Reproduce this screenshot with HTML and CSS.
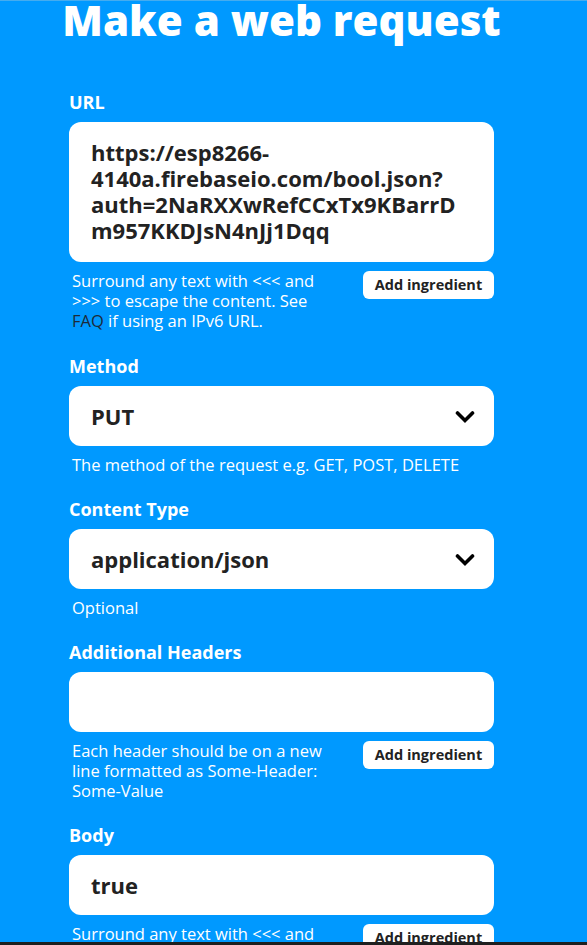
FILE: index.html
```html
<!DOCTYPE html>
<html lang="en">
<head>
<meta charset="utf-8">
<title>Make a web request</title>
<link rel="stylesheet" href="styles.css">
</head>
<body>
<div class="topline"></div>
<main class="form">
  <h1 class="title">Make a web request</h1>

  <section class="field field-first">
    <div class="label">URL</div>
    <div class="box box-multi">
      <span class="line">https://esp8266-</span>
      <span class="line">4140a.firebaseio.com/bool.json?</span>
      <span class="line">auth=2NaRXXwRefCCxTx9KBarrD</span>
      <span class="line">m957KKDJsN4nJj1Dqq</span>
    </div>
    <div class="help-row">
      <p class="help">Surround any text with &lt;&lt;&lt; and &gt;&gt;&gt; to escape the content. See <a class="faq" href="#">FAQ</a> if using an IPv6 URL.</p>
      <button class="btn" type="button">Add ingredient</button>
    </div>
  </section>

  <section class="field">
    <div class="label">Method</div>
    <div class="box box-select">
      <span class="value">PUT</span>
      <svg class="chev" width="20" height="14" viewBox="0 0 20 14"><polyline points="2.5,3 10,10.5 17.5,3" fill="none" stroke="#000" stroke-width="3.6" stroke-linecap="round" stroke-linejoin="miter"/></svg>
    </div>
    <div class="help-row">
      <p class="help help-wide">The method of the request e.g. GET, POST, DELETE</p>
    </div>
  </section>

  <section class="field">
    <div class="label">Content Type</div>
    <div class="box box-select">
      <span class="value">application/json</span>
      <svg class="chev" width="20" height="14" viewBox="0 0 20 14"><polyline points="2.5,3 10,10.5 17.5,3" fill="none" stroke="#000" stroke-width="3.6" stroke-linecap="round" stroke-linejoin="miter"/></svg>
    </div>
    <div class="help-row">
      <p class="help help-wide">Optional</p>
    </div>
  </section>

  <section class="field">
    <div class="label">Additional Headers</div>
    <div class="box box-single"></div>
    <div class="help-row">
      <p class="help">Each header should be on a new line formatted as Some-Header: Some-Value</p>
      <button class="btn" type="button">Add ingredient</button>
    </div>
  </section>

  <section class="field">
    <div class="label">Body</div>
    <div class="box box-single"><span class="value">true</span></div>
    <div class="help-row">
      <p class="help">Surround any text with &lt;&lt;&lt; and &gt;&gt;&gt; to escape the content. See <a class="faq" href="#">FAQ</a> if using an IPv6 URL.</p>
      <button class="btn" type="button">Add ingredient</button>
    </div>
  </section>
</main>
<div class="bottombar"></div>
</body>
</html>
```

FILE: styles.css
```css
html, body {
  margin: 0;
  padding: 0;
  background: #0099ff;
}
body {
  font-family: "Open Sans", Lato, "DejaVu Sans", sans-serif;
  color: #fff;
  overflow: hidden;
}
.topline {
  height: 1px;
  background: #45acef;
}
.form {
  width: 425px;
  margin-left: 69px;
}
.title {
  margin: -3px -30px 0 -30px;
  font-size: 42px;
  line-height: 44px;
  font-weight: 800;
  text-align: center;
  white-space: nowrap;
}
.field {
  margin-top: 24px;
}
.field-first {
  margin-top: 50px;
}
.field-first + .field {
  margin-top: 25px;
}
.label {
  font-size: 18px;
  line-height: 20px;
  font-weight: 700;
  margin-bottom: 10px;
}
.box {
  background: #fff;
  border-radius: 12px;
  color: #222;
  font-size: 22px;
  line-height: 26px;
  font-weight: 700;
  padding: 0 19px 0 22px;
  box-sizing: border-box;
}
.box-multi {
  padding-top: 17px;
  padding-bottom: 19px;
  height: 140px;
}
.line {
  display: block;
  white-space: nowrap;
}
.box-select, .box-single {
  height: 60px;
  display: flex;
  align-items: center;
  justify-content: space-between;
}
.chev {
  display: block;
  margin-top: 1px;
}
.help-row {
  display: flex;
  justify-content: space-between;
  align-items: flex-start;
  margin-top: 9px;
  padding-left: 3px;
}
.help {
  margin: 0;
  width: 262px;
  font-size: 16.5px;
  line-height: 20px;
  font-weight: 400;
}
.help-wide {
  width: auto;
}
.faq {
  color: #1d2a38;
  text-decoration: none;
}
.btn {
  width: 131px;
  height: 28px;
  margin: 0;
  padding: 0;
  border: 0;
  border-radius: 6px;
  background: #fff;
  color: #222;
  font-family: inherit;
  font-size: 14.5px;
  font-weight: 700;
  line-height: 28px;
  cursor: pointer;
}
.bottombar {
  position: fixed;
  left: 0;
  right: 0;
  bottom: 0;
  height: 3px;
  background: #1f1f1f;
}
```
